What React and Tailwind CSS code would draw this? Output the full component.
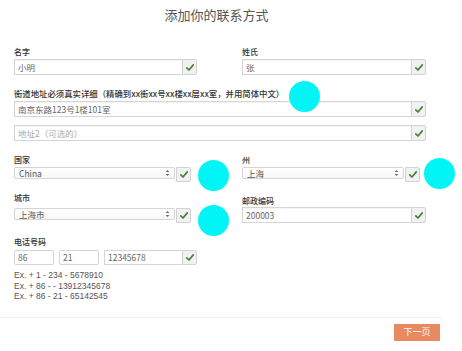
import React from "react";

const font = { fontFamily: '"Noto Sans CJK SC", "Liberation Sans", sans-serif' };

function Check({ h = "h-[16px]", w = "w-[15px]" }) {
  return (
    <div className={`${h} ${w} shrink-0 flex items-center justify-center border border-[#d2d2d2] bg-[#f1f1f1] rounded-r-[2px]`}>
      <svg width="8" height="7" viewBox="0 0 8 7">
        <path d="M0.8 3.8 L3 6 L7.3 0.9" fill="none" stroke="#4b7f3a" strokeWidth="1.7" strokeLinecap="round" strokeLinejoin="round" />
      </svg>
    </div>
  );
}

function Label({ children, className = "" }) {
  return (
    <div className={`h-[12px] leading-[12px] font-medium text-[#333] whitespace-nowrap ${className}`}>{children}</div>
  );
}

function TextInput({ value, placeholder, className = "" }) {
  return (
    <div className={`flex ${className}`}>
      <div className="flex-1 h-[16px] border border-r-0 border-[#d5d5d5] bg-white flex items-center pl-[3px] text-[8.5px] text-[#666] shadow-[inset_0_1px_1px_rgba(0,0,0,0.05)]">
        {value ? value : <span className="text-[#aaa]">{placeholder}</span>}
      </div>
      <Check />
    </div>
  );
}

function Arrows() {
  return (
    <svg width="5" height="8" viewBox="0 0 5 8" className="mr-[4px]">
      <path d="M0.6 3 L2.5 0.9 L4.4 3 Z" fill="#666" />
      <path d="M0.6 5 L2.5 7.1 L4.4 5 Z" fill="#666" />
    </svg>
  );
}

function Select({ value, width }) {
  return (
    <div className="flex items-start">
      <div className={`${width} h-[12px] border border-[#d5d5d5] rounded-[2px] bg-gradient-to-b from-white to-[#f7f7f7] flex items-center justify-between pl-[4px] text-[8.5px] text-[#555]`}>
        <span>{value}</span>
        <Arrows />
      </div>
      <div className="ml-[1px]">
        <Check h="h-[15px]" w="w-[15px]" />
      </div>
    </div>
  );
}

function Dot({ className }) {
  return <div className={`absolute w-[31px] h-[31px] rounded-full bg-[#00f6f6] ${className}`} />;
}

export default function App() {
  return (
    <div className="relative w-[462px] h-[351px] bg-white overflow-hidden" style={font}>
      <div className="w-[433px] h-[30px] leading-[30px] text-center text-[13px] text-[#555]">添加你的联系方式</div>

      <div className="pl-[14px] pr-[36px]">
        <div className="grid grid-cols-[183px_184px] gap-x-[45px] mt-[16px]">
          <div>
            <Label className="text-[8px]">名字</Label>
            <TextInput value="小明" className="mt-[1px]" />
          </div>
          <div>
            <Label className="text-[8px]">姓氏</Label>
            <TextInput value="张" className="mt-[1px]" />
          </div>
        </div>

        <Label className="mt-[12px] text-[8.4px]">街道地址必须真实详细（精确到xx街xx号xx楼xx层xx室，并用简体中文）</Label>
        <TextInput value="南京东路123号1楼101室" className="mt-[2px]" />
        <TextInput placeholder="地址2（可选的）" className="mt-[8px]" />

        <div className="grid grid-cols-[183px_184px] gap-x-[45px] mt-[13px]">
          <div>
            <Label className="text-[8px]">国家</Label>
            <div className="mt-[1px]">
              <Select value="China" width="w-[161px]" />
            </div>
            <Label className="mt-[10px] text-[8px]">城市</Label>
            <div className="mt-[4px]">
              <Select value="上海市" width="w-[161px]" />
            </div>
          </div>
          <div>
            <Label className="text-[8px]">州</Label>
            <div className="mt-[1px]">
              <Select value="上海" width="w-[162px]" />
            </div>
            <Label className="mt-[13px] text-[8px]">邮政编码</Label>
            <TextInput value="200003" className="mt-[0px]" />
          </div>
        </div>

        <Label className="mt-[13px] text-[8px]">电话号码</Label>
        <div className="flex mt-[2px] w-[183px]">
          <div className="w-[40px] h-[15px] border border-[#d5d5d5] rounded-[2px] flex items-center pl-[3px] text-[8.5px] text-[#666]">86</div>
          <div className="w-[40px] h-[15px] ml-[5px] border border-[#d5d5d5] rounded-[2px] flex items-center pl-[3px] text-[8.5px] text-[#666]">21</div>
          <div className="flex-1 ml-[5px] flex">
            <div className="flex-1 h-[15px] border border-r-0 border-[#d5d5d5] flex items-center pl-[3px] text-[8.5px] text-[#666]">12345678</div>
            <Check h="h-[15px]" />
          </div>
        </div>
        <div className="mt-[5px] text-[8.5px] leading-[10.5px] text-[#555]" style={{ fontFamily: '"Liberation Sans", sans-serif' }}>
          <div>Ex. + 1 - 234 - 5678910</div>
          <div>Ex. + 86 - - 13912345678</div>
          <div>Ex. + 86 - 21 - 65142545</div>
        </div>
      </div>

      <div className="mt-[15px] h-[1px] bg-[#f0f0f0] w-[442px]" />
      <div className="flex justify-end w-[440px] mt-[6px]">
        <div className="w-[46px] h-[17px] bg-[#e8895f] flex items-center justify-center text-[9px] text-white">下一页</div>
      </div>

      <Dot className="left-[289px] top-[81px]" />
      <Dot className="left-[198px] top-[160px]" />
      <Dot className="left-[198px] top-[205px]" />
      <Dot className="left-[424px] top-[158px]" />
    </div>
  );
}
